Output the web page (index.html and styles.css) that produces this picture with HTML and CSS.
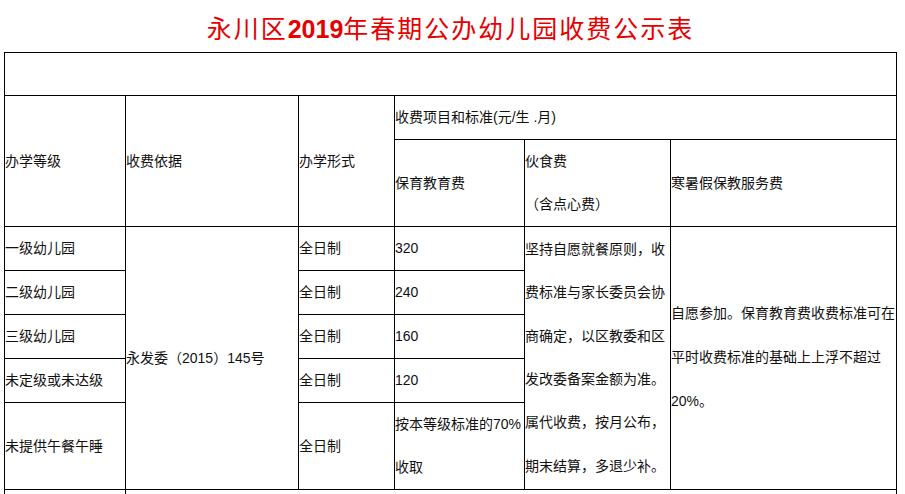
FILE: index.html
```html
<!DOCTYPE html>
<html lang="zh-CN">
<head>
<meta charset="utf-8">
<title>永川区2019年春期公办幼儿园收费公示表</title>
<link rel="stylesheet" href="styles.css">
</head>
<body>
<div class="page">
  <h1 class="title"><span class="cjk">永川区</span><span class="num">2019</span><span class="cjk">年春期公办幼儿园收费公示表</span></h1>
  <div class="sheet">
    <div class="c full"></div>

    <div class="c rs2">办学等级</div>
    <div class="c rs2">收费依据</div>
    <div class="c rs2">办学形式</div>
    <div class="c cs3">收费项目和标准(元/生 .月)</div>

    <div class="c">保育教育费</div>
    <div class="c"><div class="multi">伙食费<br><span class="paren">（含点心费）</span></div></div>
    <div class="c">寒暑假保教服务费</div>

    <div class="c">一级幼儿园</div>
    <div class="c rs5">永发委（2015）145号</div>
    <div class="c">全日制</div>
    <div class="c">320</div>
    <div class="c rs5"><div class="multi">坚持自愿就餐原则，收费标准与家长委员会协商确定，以区教委和区发改委备案金额为准。属代收费，按月公布，期末结算，多退少补。</div></div>
    <div class="c rs5"><div class="multi wide">自愿参加。保育教育费收费标准可在平时收费标准的基础上上浮不超过20%。</div></div>

    <div class="c">二级幼儿园</div>
    <div class="c">全日制</div>
    <div class="c">240</div>

    <div class="c">三级幼儿园</div>
    <div class="c">全日制</div>
    <div class="c">160</div>

    <div class="c">未定级或未达级</div>
    <div class="c">全日制</div>
    <div class="c">120</div>

    <div class="c">未提供午餐午睡</div>
    <div class="c">全日制</div>
    <div class="c"><div class="multi tight">按本等级标准的70%收取</div></div>

    <div class="c end"></div>
    <div class="c end cs5"></div>
  </div>
</div>
</body>
</html>
```

FILE: styles.css
```css
html, body {
  margin: 0;
  padding: 0;
  background: #fff;
  overflow: hidden;
}

.page {
  width: 893px;
  margin-left: 4px;
  font-family: "Liberation Sans", "Noto Sans CJK SC", sans-serif;
  font-size: 14px;
  color: #111;
}

.title {
  margin: 0;
  height: 52px;
  padding-top: 2px;
  box-sizing: border-box;
  line-height: 50px;
  text-align: center;
  color: #e60000;
  font-weight: normal;
  white-space: nowrap;
}

.title .cjk {
  font-family: "Noto Sans CJK SC", sans-serif;
  font-size: 25px;
  letter-spacing: 2px;
}

.title .num {
  font-family: "Liberation Sans", sans-serif;
  font-size: 25px;
  font-weight: bold;
  letter-spacing: 0;
}

.sheet {
  display: grid;
  grid-template-columns: 121px 173px 96px 130px 146px 226px;
  grid-template-rows: 43px 44px 87px 44px 44px 44px 44px 87px 4px;
  border-left: 1px solid #000;
  border-top: 1px solid #000;
}

.c {
  display: flex;
  align-items: center;
  border-right: 1px solid #000;
  border-bottom: 1px solid #000;
  line-height: 43px;
  white-space: nowrap;
  overflow: hidden;
}

.c.end {
  border-bottom: 0;
}

.full { grid-column: 1 / -1; }
.cs3 { grid-column: span 3; }
.cs5 { grid-column: span 5; }
.rs2 { grid-row: span 2; }
.rs5 { grid-row: span 5; }

.multi {
  white-space: normal;
  line-height: 43.3px;
  width: 100%;
}

.multi.wide {
  line-height: 43.8px;
}

.multi.tight {
  line-height: 42.7px;
}
```
